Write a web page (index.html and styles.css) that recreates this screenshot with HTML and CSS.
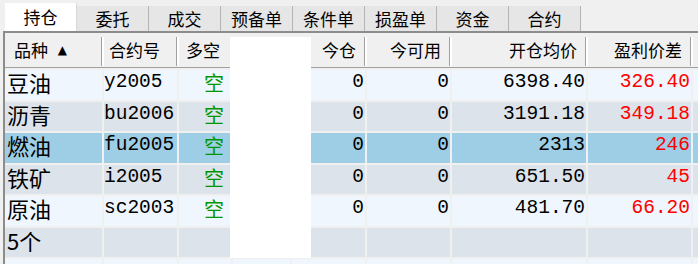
FILE: index.html
```html
<!DOCTYPE html>
<html lang="zh-CN">
<head>
    <meta charset="UTF-8">
    <title>持仓</title>
    <link rel="stylesheet" href="styles.css">
</head>
<body>

<div class="app">
    <div class="tabs">
        <div class="tab active">持仓</div>
        <div class="tab">委托</div>
        <div class="tab">成交</div>
        <div class="tab">预备单</div>
        <div class="tab">条件单</div>
        <div class="tab">损盈单</div>
        <div class="tab">资金</div>
        <div class="tab">合约</div>
    </div>

    <div class="panel">
        <div class="row head">
            <div class="cell hl c1">品种 <span class="sort">▲</span></div>
            <div class="cell hl c2">合约号</div>
            <div class="cell hl">多空</div>
            <div class="cell"></div>
            <div class="cell hr">今仓</div>
            <div class="cell hr">今可用</div>
            <div class="cell hr">开仓均价</div>
            <div class="cell hr">盈利价差</div>
            <div class="cell last"></div>
        </div>

        <div class="row light">
            <div class="cell name">豆油</div>
            <div class="cell code">y2005</div>
            <div class="cell side">空</div>
            <div class="cell"></div>
            <div class="cell num">0</div>
            <div class="cell num">0</div>
            <div class="cell num">6398.40</div>
            <div class="cell num red">326.40</div>
            <div class="cell"></div>
        </div>

        <div class="row dark">
            <div class="cell name">沥青</div>
            <div class="cell code">bu2006</div>
            <div class="cell side">空</div>
            <div class="cell"></div>
            <div class="cell num">0</div>
            <div class="cell num">0</div>
            <div class="cell num">3191.18</div>
            <div class="cell num red">349.18</div>
            <div class="cell"></div>
        </div>

        <div class="row selected">
            <div class="cell name">燃油</div>
            <div class="cell code">fu2005</div>
            <div class="cell side">空</div>
            <div class="cell"></div>
            <div class="cell num">0</div>
            <div class="cell num">0</div>
            <div class="cell num">2313</div>
            <div class="cell num red">246</div>
            <div class="cell"></div>
        </div>

        <div class="row dark">
            <div class="cell name">铁矿</div>
            <div class="cell code">i2005</div>
            <div class="cell side">空</div>
            <div class="cell"></div>
            <div class="cell num">0</div>
            <div class="cell num">0</div>
            <div class="cell num">651.50</div>
            <div class="cell num red">45</div>
            <div class="cell"></div>
        </div>

        <div class="row light">
            <div class="cell name">原油</div>
            <div class="cell code">sc2003</div>
            <div class="cell side">空</div>
            <div class="cell"></div>
            <div class="cell num">0</div>
            <div class="cell num">0</div>
            <div class="cell num">481.70</div>
            <div class="cell num red">66.20</div>
            <div class="cell"></div>
        </div>

        <div class="row dark">
            <div class="cell name">5个</div>
            <div class="cell"></div>
            <div class="cell"></div>
            <div class="cell"></div>
            <div class="cell"></div>
            <div class="cell"></div>
            <div class="cell"></div>
            <div class="cell"></div>
            <div class="cell"></div>
        </div>

        <div class="row light">
            <div class="cell"></div>
            <div class="cell"></div>
            <div class="cell"></div>
            <div class="cell"></div>
            <div class="cell"></div>
            <div class="cell"></div>
            <div class="cell"></div>
            <div class="cell"></div>
            <div class="cell"></div>
        </div>
    </div>

    <!-- blanked-out column -->
    <div class="mask"></div>
</div>

</body>
</html>
```

FILE: styles.css
```css
* {
    box-sizing: border-box;
}

body {
    margin: 0;
    background: #f0f0f0;
    font-family: "Noto Sans CJK SC", sans-serif;
    color: #000;
    overflow: hidden;
}

.app {
    position: relative;
    width: 698px;
    height: 264px;
    overflow: hidden;
}

/* Tabs */
.tabs {
    display: flex;
    align-items: flex-end;
    height: 31px;
    padding-left: 5px;
}

.tab {
    width: 72px;
    height: 25px;
    background: #e6e6e6;
    border-right: 1px solid #b4b4b4;
    font-size: 17px;
    line-height: 25px;
    text-align: center;
}

.tab.active {
    height: 28px;
    line-height: 25px;
    padding-top: 1px;
    background: #fff;
    border-right-color: #d8d8d8;
}

/* Grid panel */
.panel {
    margin-left: 3px;
    height: 233px;
    border-top: 2px solid #8c8c8c;
    border-left: 2px solid #8c8c8c;
    background: #f0f0f0;
}

.row {
    display: grid;
    grid-template-columns: 97px 73px 52px 57px 73px 83px 134px 103px 1fr;
    column-gap: 2px;
    height: 29.5px;
    margin-bottom: 2px;
}

.cell {
    white-space: nowrap;
}

.row.head {
    height: 35px;
    margin-bottom: 2px;
    border-bottom: 1px solid #a0a0a0;
    column-gap: 0;
    grid-template-columns: 99px 75px 54px 59px 75px 85px 136px 105px 1fr;
}

.head .cell {
    position: relative;
    font-size: 17px;
    line-height: 34px;
    background: #f0f0f0;
}

.head .cell::after {
    content: "";
    position: absolute;
    right: 0;
    top: 4px;
    bottom: 1px;
    width: 2px;
    border-left: 1px solid #a0a0a0;
    background: #fff;
}

.head .cell.last::after {
    display: none;
}

.hl {
    padding-left: 7px;
}

.head .c1 {
    padding-left: 9px;
}

.head .c2 {
    padding-left: 5px;
}

.hr {
    text-align: right;
    padding-right: 11px;
}

.sort {
    font-family: "DejaVu Sans", sans-serif;
    font-size: 12px;
    vertical-align: 3px;
    margin-left: 6px;
}

.light .cell {
    background: #eff6fe;
}

.dark .cell {
    background: #dce3ea;
}

.selected .cell {
    background: #9ecde6;
}

.name {
    font-size: 22px;
    line-height: 24px;
    padding-left: 2px;
}

.code {
    font-family: "Liberation Mono", monospace;
    font-size: 19.5px;
    line-height: 25px;
    padding-left: 0;
}

.side {
    font-size: 20px;
    line-height: 25px;
    text-align: right;
    padding-right: 7px;
    color: #009600;
}

.num {
    font-family: "Liberation Mono", monospace;
    font-size: 19.5px;
    line-height: 25px;
    text-align: right;
    padding-right: 1px;
}

.red {
    color: #ff0000;
}

/* white block covering a hidden column */
.mask {
    position: absolute;
    left: 230px;
    top: 37px;
    width: 81px;
    height: 221px;
    background: #fff;
}
```
